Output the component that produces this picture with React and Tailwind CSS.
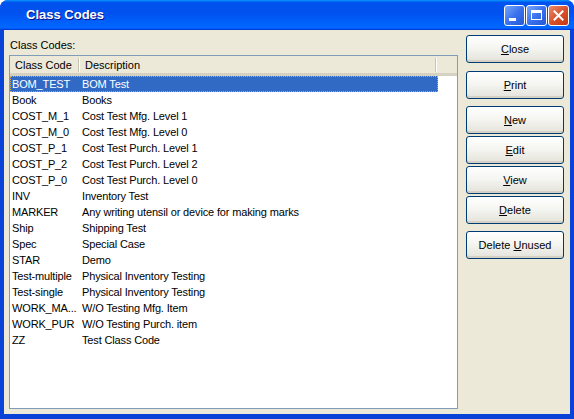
import React from "react";

const rows = [
  ["BOM_TEST", "BOM Test"],
  ["Book", "Books"],
  ["COST_M_1", "Cost Test Mfg. Level 1"],
  ["COST_M_0", "Cost Test Mfg. Level 0"],
  ["COST_P_1", "Cost Test Purch. Level 1"],
  ["COST_P_2", "Cost Test Purch. Level 2"],
  ["COST_P_0", "Cost Test Purch. Level 0"],
  ["INV", "Inventory Test"],
  ["MARKER", "Any writing utensil or device for making marks"],
  ["Ship", "Shipping Test"],
  ["Spec", "Special Case"],
  ["STAR", "Demo"],
  ["Test-multiple", "Physical Inventory Testing"],
  ["Test-single", "Physical Inventory Testing"],
  ["WORK_MA...", "W/O Testing Mfg. Item"],
  ["WORK_PUR", "W/O Testing Purch. item"],
  ["ZZ", "Test Class Code"],
];

function XpButton({ label, hot, extra = "" }) {
  const i = label.indexOf(hot);
  return (
    <button
      className={`w-[98px] h-[28px] rounded-[3px] border border-[#003C74] bg-gradient-to-b from-white via-[#F4F4F0] to-[#E3E2DA] shadow-[inset_0_-2px_0_#D6D0C5] text-[11px] text-black ${extra}`}
    >
      {label.slice(0, i)}
      <span className="underline">{hot}</span>
      {label.slice(i + hot.length)}
    </button>
  );
}

function TitleButton({ children, red }) {
  return (
    <div
      className={`w-[21px] h-[21px] rounded-[3px] border border-white flex items-center justify-center ${
        red
          ? "bg-gradient-to-br from-[#E88A6C] via-[#D9512B] to-[#C2380F]"
          : "bg-gradient-to-br from-[#7AA6F8] via-[#3A72EE] to-[#2357D6]"
      }`}
    >
      {children}
    </div>
  );
}

export default function App() {
  return (
    <div
      className="w-[574px] h-[419px] flex flex-col rounded-t-[8px] overflow-hidden bg-[#0842D6]"
      style={{ fontFamily: '"Liberation Sans", Arial, sans-serif' }}
    >
      <div className="h-[30px] shrink-0 flex items-center justify-between pl-[26px] pr-[5px] bg-[linear-gradient(180deg,#0997ff_0%,#0053ee_8%,#0050ee_40%,#0066ff_88%,#0066ff_93%,#005bff_95%,#003dd7_96%,#003dd7_100%)]">
        <span className="text-white font-bold text-[13px] [text-shadow:1px_1px_#0f1089]">Class Codes</span>
        <div className="flex gap-[1px]">
          <TitleButton>
            <div className="w-[7px] h-[3px] bg-white mt-[8px] -ml-[4px]" />
          </TitleButton>
          <TitleButton>
            <div className="w-[11px] h-[10px] border border-white border-t-[3px]" />
          </TitleButton>
          <TitleButton red>
            <svg width="11" height="11" viewBox="0 0 11 11">
              <path d="M1.5 1.5 L9.5 9.5 M9.5 1.5 L1.5 9.5" stroke="white" strokeWidth="2" strokeLinecap="square" />
            </svg>
          </TitleButton>
        </div>
      </div>

      <div className="flex-1 mx-[4px] mb-[5px] bg-[#ECE9D8] flex">
        <div className="flex flex-col pl-[5px] pt-[8px] pb-[5px]">
          <div className="h-[14px] mb-[3px] pl-[1px] text-[11px] leading-[14px] text-black">Class Codes:</div>
          <div className="w-[449px] flex-1 border border-[#7F9DB9] bg-white">
            <div className="h-[20px] flex bg-[#ECE9D8] shadow-[inset_0_-3px_0_#D6D2C2] text-[11px] text-black">
              <div className="w-[70px] pl-[5px] flex items-center justify-between pb-[2px]">
                <span>Class Code</span>
                <span className="w-[2px] h-[14px] border-l border-[#C7C5B2] border-r border-r-white" />
              </div>
              <div className="w-[357px] pl-[5px] flex items-center justify-between pb-[2px]">
                <span>Description</span>
                <span className="w-[2px] h-[14px] border-l border-[#C7C5B2] border-r border-r-white" />
              </div>
            </div>
            {rows.map(([code, desc], i) => (
              <div
                key={code}
                className={`w-[428px] h-[16px] flex items-center text-[11px] tracking-[-0.15px] ${
                  i === 0 ? "bg-[#316AC5] text-white outline outline-1 outline-dotted outline-[#D8A54A] -outline-offset-1" : "text-black"
                }`}
              >
                <span className="w-[70px] pl-[2px] whitespace-nowrap overflow-hidden">{code}</span>
                <span className="pl-[2px] whitespace-nowrap">{desc}</span>
              </div>
            ))}
          </div>
        </div>

        <div className="flex flex-col pl-[8px] pt-[5px]">
          <XpButton label="Close" hot="C" />
          <XpButton label="Print" hot="P" extra="mt-[8px]" />
          <XpButton label="New" hot="N" extra="mt-[7px]" />
          <XpButton label="Edit" hot="E" extra="mt-[2px]" />
          <XpButton label="View" hot="V" extra="mt-[2px]" />
          <XpButton label="Delete" hot="D" extra="mt-[2px]" />
          <XpButton label="Delete Unused" hot="U" extra="mt-[7px]" />
        </div>
      </div>
    </div>
  );
}
